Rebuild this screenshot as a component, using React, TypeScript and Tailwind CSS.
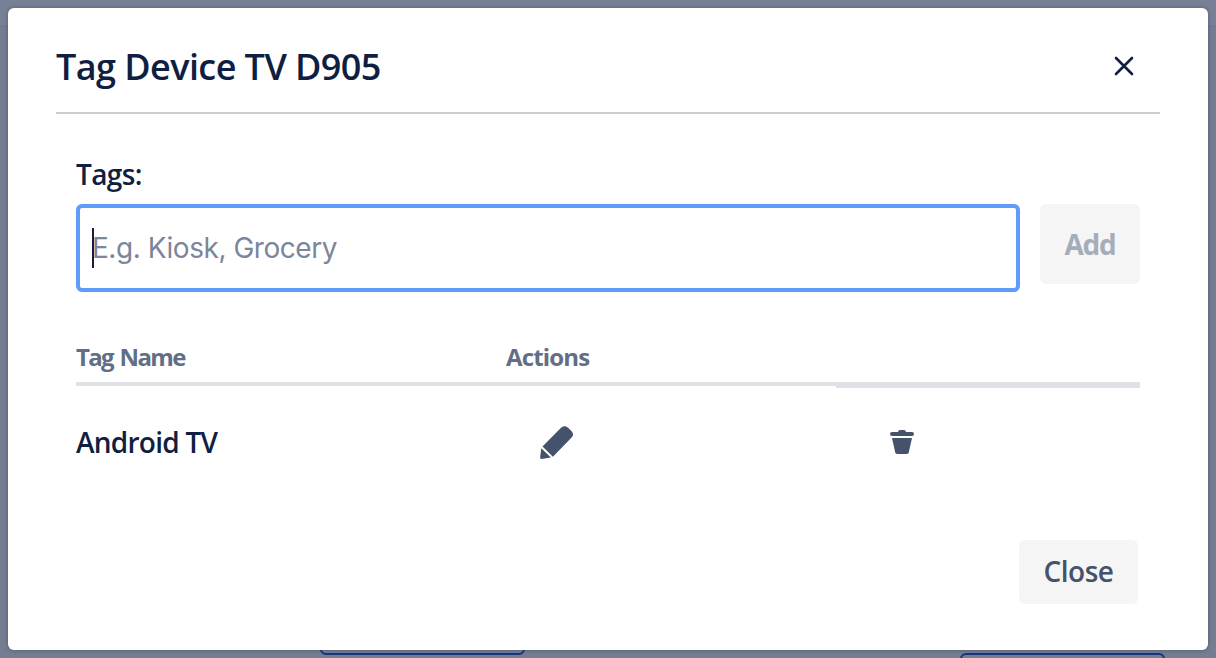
import React from "react";

function PencilIcon() {
  return (
    <svg width="34" height="34" viewBox="0 0 34 34" fill="#44526c" className="block">
      <path d="M2.5 20.6 L21.3 1.6 Q24.7 -1.2 28 1.7 L31.4 5.1 Q34.6 8.3 31.6 11.6 L12.9 30.7 Z" />
      <path d="M1.3 22.2 L10.9 31.5 L1.5 33 Q0 33.1 0.1 31.6 Z" />
    </svg>
  );
}

function TrashIcon() {
  return (
    <svg width="24" height="24" viewBox="0 0 24 24" fill="#44526c" className="block">
      <path d="M8 2 Q8.2 0 10 0 H14 Q15.8 0 16 2 H22 Q24 2 24 4 Q24 6 22 6 H2 Q0 6 0 4 Q0 2 2 2 Z" />
      <path d="M2 8 H22 L18.8 22.3 Q18.4 24 16.8 24 H7.2 Q5.6 24 5.2 22.3 Z" />
    </svg>
  );
}

function Backdrop() {
  return (
    <div className="absolute inset-0 bg-[#747d91]">
      <div className="h-[27px] border-b border-[#6d768c] bg-[#788095]" />
      <div className="absolute top-[620px] left-[320px] h-[35px] w-[205px] rounded-[6px] border-2 border-[#14367f]" />
      <div className="absolute top-[653px] left-[960px] h-[35px] w-[205px] rounded-[6px] border-2 border-[#14367f]" />
    </div>
  );
}

export default function App() {
  return (
    <div className="relative h-[658px] w-[1216px] overflow-hidden font-['Open_Sans',sans-serif] whitespace-nowrap text-[#0f1e41]">
      <Backdrop />
      <div className="relative p-2">
        <section className="flex h-[642px] flex-col rounded-[6px] bg-white px-12 shadow-[0_0_4px_rgba(9,30,66,0.35)]">
          <header className="flex h-[106px] items-center justify-between border-b-2 border-[#cccccc] pr-[26px] pt-[14px]">
            <h1 className="text-[36px] leading-[48px] font-semibold tracking-[-0.57px]">Tag Device TV D905</h1>
            <button aria-label="Close dialog" className="-mt-0.5">
              <svg width="20" height="20" viewBox="0 0 20 20" fill="none" stroke="#0f1e41" strokeWidth="2.6" strokeLinecap="round" className="block">
                <path d="M2 2 L18 18 M18 2 L2 18" />
              </svg>
            </button>
          </header>

          <div className="px-5 pt-[40px]">
            <label className="block h-[50px] text-[28px] leading-[40px] font-semibold tracking-[-0.6px]">Tags:</label>
            <div className="flex items-start gap-5">
              <div className="relative flex h-[88px] w-[944px] items-center rounded-[6px] border-4 border-[#5e9bfb] pl-3">
                <span className="absolute top-[20px] left-[12px] h-[40px] w-[2px] bg-[#0f1e41]" />
                <span className="font-['Inter',sans-serif] text-[28px] tracking-[-0.46px] text-[#7c869a]">E.g. Kiosk, Grocery</span>
              </div>
              <button className="flex h-20 w-[100px] items-center justify-center rounded-[6px] bg-[#f5f5f5] text-[28px] font-bold text-[#a6adba]">
                <span className="tracking-[-1.2px]">Add</span>
              </button>
            </div>

            <div className="mt-[46px] grid grid-cols-[430px_330px_304px] text-[24px] leading-[38px] font-bold text-[#616e86]">
              <div className="h-12 border-b-4 border-[#e0e1e6]">
                <span className="tracking-[-1.65px] [word-spacing:2px]">Tag Name</span>
              </div>
              <div className="h-12 border-b-4 border-[#e0e1e6]">
                <span className="tracking-[-0.85px]">Actions</span>
              </div>
              <div className="h-[50px] border-b-[6px] border-[#e0e1e6]" />
            </div>

            <div className="mt-[32px] grid h-11 grid-cols-[430px_384px_250px] items-center">
              <span className="text-[28px] leading-[40px] font-semibold tracking-[-0.74px]">Android TV</span>
              <button aria-label="Edit tag" className="mt-0.5 ml-[34px] w-[34px]">
                <PencilIcon />
              </button>
              <button aria-label="Delete tag" className="w-6">
                <TrashIcon />
              </button>
            </div>
          </div>

          <footer className="mt-auto mb-[46px] flex justify-end pr-[22px]">
            <button className="flex h-16 w-[119px] items-center justify-center rounded-[6px] bg-[#f5f5f5] pb-0.5 text-[28px] font-semibold text-[#44526c]">
              <span className="tracking-[-0.5px]">Close</span>
            </button>
          </footer>
        </section>
      </div>
    </div>
  );
}
